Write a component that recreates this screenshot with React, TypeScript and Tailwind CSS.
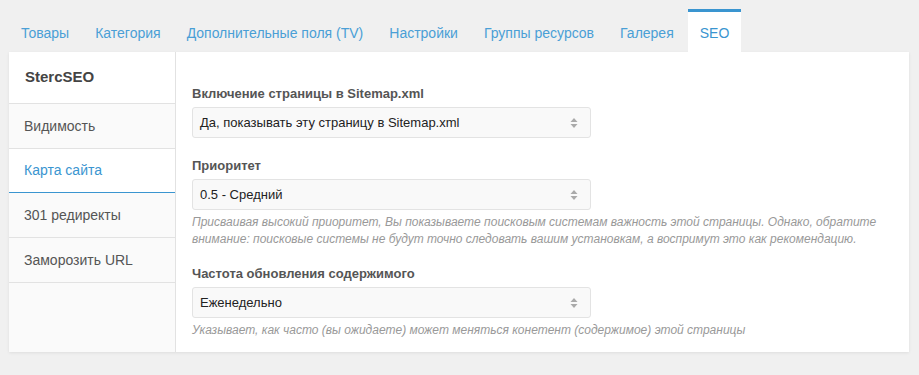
import React from 'react';

const tabs = ['Товары', 'Категория', 'Дополнительные поля (TV)', 'Настройки', 'Группы ресурсов', 'Галерея', 'SEO'];
const sideItems = ['Видимость', 'Карта сайта', '301 редиректы', 'Заморозить URL'];

function SelectArrows() {
  return (
    <svg width="8" height="12" viewBox="0 0 8 12" className="shrink-0">
      <path d="M4 1 L7.5 5 L0.5 5 Z" fill="#aaaaaa" />
      <path d="M4 11 L7.5 7 L0.5 7 Z" fill="#aaaaaa" />
    </svg>
  );
}

function Select({ value }: { value: string }) {
  return (
    <div className="flex h-[31px] w-[399px] items-center justify-between rounded-[3px] border border-[#e3e3e3] bg-[#f9f9f9] pl-[7px] pr-[12px] text-[13px] text-[#222]">
      <span>{value}</span>
      <SelectArrows />
    </div>
  );
}

function Field({ label, value, help }: { label: string; value: string; help?: string }) {
  return (
    <div>
      <p className="text-[13px] font-bold leading-[18px] text-[#555]">{label}</p>
      <div className="mt-[4px]">
        <Select value={value} />
      </div>
      {help && (
        <p className="mt-[4px] text-[12px] italic leading-[17px] text-[#999]">{help}</p>
      )}
    </div>
  );
}

export default function App() {
  return (
    <div className="min-h-[375px] bg-[#f0f0f0] px-[9px] pt-[9px] font-['Liberation_Sans',Arial,sans-serif]">
      <div className="flex h-[43px] gap-[2px]">
        {tabs.map((t) => {
          const active = t === 'SEO';
          return (
            <div
              key={t}
              className={
                active
                  ? 'flex items-center border-t-[3px] border-[#3a95d0] bg-white px-3 text-[14px] text-[#3a95d0]'
                  : 'flex items-center border-t-[3px] border-transparent px-3 text-[14px] text-[#4a9fd6]'
              }
            >
              <span className="pt-[2px]">{t}</span>
            </div>
          );
        })}
      </div>

      <div className="flex h-[300px] w-[900px] bg-white shadow-[0_1px_3px_rgba(0,0,0,0.08)]">
        <div className="flex w-[167px] shrink-0 flex-col border-r border-[#e2e2e2] bg-[#fafafa]">
          <div className="flex h-[52px] items-center border-b border-[#e2e2e2] bg-white pl-[16px] text-[15px] font-bold text-[#444]">
            StercSEO
          </div>
          {sideItems.map((s) => {
            const active = s === 'Карта сайта';
            return (
              <div
                key={s}
                className={
                  active
                    ? 'flex h-[44px] items-center border-b border-[#3a95d0] bg-white pl-[15px] text-[14px] text-[#3a95d0]'
                    : 'flex h-[45px] items-center border-b border-[#e2e2e2] pl-[15px] text-[14px] text-[#555]'
                }
              >
                {s}
              </div>
            );
          })}
        </div>

        <div className="flex flex-1 flex-col pl-[16px] pr-[16px] pt-[33px]">
          <Field label="Включение страницы в Sitemap.xml" value="Да, показывать эту страницу в Sitemap.xml" />
          <div className="mt-[19px]">
            <Field
              label="Приоритет"
              value="0.5 - Средний"
              help="Присваивая высокий приоритет, Вы показываете поисковым системам важность этой страницы. Однако, обратите внимание: поисковые системы не будут точно следовать вашим установкам, а воспримут это как рекомендацию."
            />
          </div>
          <div className="mt-[17px]">
            <Field
              label="Частота обновления содержимого"
              value="Еженедельно"
              help="Указывает, как часто (вы ожидаете) может меняться конетент (содержимое) этой страницы"
            />
          </div>
        </div>
      </div>
    </div>
  );
}
